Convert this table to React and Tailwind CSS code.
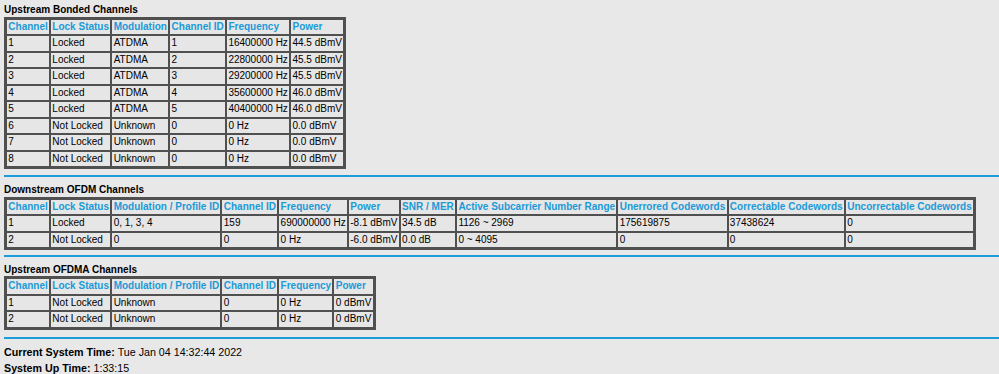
import React from "react";

const upstream = [
  ["1", "Locked", "ATDMA", "1", "16400000 Hz", "44.5 dBmV"],
  ["2", "Locked", "ATDMA", "2", "22800000 Hz", "45.5 dBmV"],
  ["3", "Locked", "ATDMA", "3", "29200000 Hz", "45.5 dBmV"],
  ["4", "Locked", "ATDMA", "4", "35600000 Hz", "46.0 dBmV"],
  ["5", "Locked", "ATDMA", "5", "40400000 Hz", "46.0 dBmV"],
  ["6", "Not Locked", "Unknown", "0", "0 Hz", "0.0 dBmV"],
  ["7", "Not Locked", "Unknown", "0", "0 Hz", "0.0 dBmV"],
  ["8", "Not Locked", "Unknown", "0", "0 Hz", "0.0 dBmV"],
];

const downstream = [
  ["1", "Locked", "0, 1, 3, 4", "159", "690000000 Hz", "-8.1 dBmV", "34.5 dB", "1126 ~ 2969", "175619875", "37438624", "0"],
  ["2", "Not Locked", "0", "0", "0 Hz", "-6.0 dBmV", "0.0 dB", "0 ~ 4095", "0", "0", "0"],
];

const ofdma = [
  ["1", "Not Locked", "Unknown", "0", "0 Hz", "0 dBmV"],
  ["2", "Not Locked", "Unknown", "0", "0 Hz", "0 dBmV"],
];

function Table({ headers, rows }) {
  return (
    <table className="border-separate border-spacing-0 border-2 border-[#505050] bg-[#e6e6e6]">
      <thead>
        <tr>
          {headers.map((h, i) => (
            <th
              key={i}
              className="border border-[#505050] px-[1.3px] py-px text-left font-bold text-[#1b9ad8] whitespace-nowrap leading-[12.5px]"
            >
              {h}
            </th>
          ))}
        </tr>
      </thead>
      <tbody>
        {rows.map((r, ri) => (
          <tr key={ri}>
            {r.map((c, ci) => (
              <td
                key={ci}
                className="border border-[#505050] px-[1.3px] py-px text-left text-black whitespace-nowrap leading-[12.5px]"
              >
                {c}
              </td>
            ))}
          </tr>
        ))}
      </tbody>
    </table>
  );
}

export default function App() {
  return (
    <div
      className="w-[999px] h-[374px] overflow-hidden bg-[#e8e8e8] pl-[4px] text-[10px]"
      style={{ fontFamily: '"Liberation Sans", Arial, sans-serif' }}
    >
      <div className="font-bold text-black leading-[12.5px] pt-[4px]">Upstream Bonded Channels</div>
      <Table
        headers={["Channel", "Lock Status", "Modulation", "Channel ID", "Frequency", "Power"]}
        rows={upstream}
      />
      <div className="mt-[6px] h-[2px] bg-[#1a9ddb]" />

      <div className="font-bold text-black leading-[12.5px] pt-[7px]">Downstream OFDM Channels</div>
      <Table
        headers={[
          "Channel",
          "Lock Status",
          "Modulation / Profile ID",
          "Channel ID",
          "Frequency",
          "Power",
          "SNR / MER",
          "Active Subcarrier Number Range",
          "Unerrored Codewords",
          "Correctable Codewords",
          "Uncorrectable Codewords",
        ]}
        rows={downstream}
      />
      <div className="mt-[5px] h-[2px] bg-[#1a9ddb]" />

      <div className="font-bold text-black leading-[12.5px] pt-[6.5px]">Upstream OFDMA Channels</div>
      <Table
        headers={["Channel", "Lock Status", "Modulation / Profile ID", "Channel ID", "Frequency", "Power"]}
        rows={ofdma}
      />
      <div className="mt-[7px] h-[2px] bg-[#1a9ddb]" />

      <div className="pt-[5px] text-[10.7px] leading-[16px] text-black">
        <div>
          <span className="font-bold">Current System Time:</span> Tue Jan 04 14:32:44 2022
        </div>
        <div>
          <span className="font-bold">System Up Time:</span> 1:33:15
        </div>
      </div>
    </div>
  );
}
